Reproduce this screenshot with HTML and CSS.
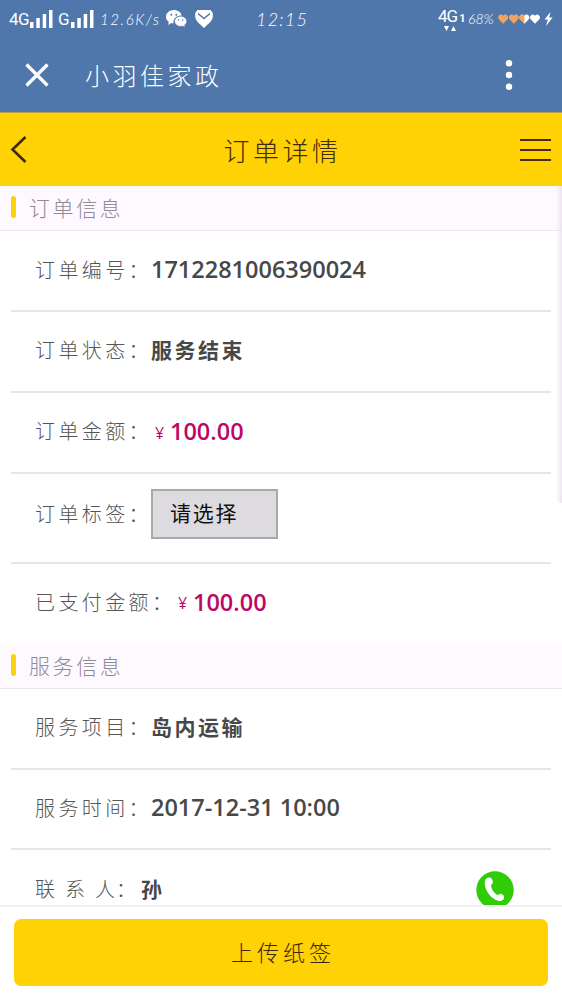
FILE: index.html
```html
<!DOCTYPE html>
<html lang="zh-CN">
<head>
<meta charset="utf-8">
<title>订单详情</title>
<link rel="stylesheet" href="styles.css">
</head>
<body>
<div class="phone">
  <header class="appbar">
    <div class="status">
      <span class="net">4G</span>
      <svg class="bars" width="23" height="18" viewBox="0 0 23 18"><path d="M0 12h3.500v6H0zM6.300 8h3.500v10H6.300zM12.700 4h3.500v14h-3.500zM19 0h3.500v18H19z" fill="#fff"/></svg>
      <span class="net gap">G</span>
      <svg class="bars" width="23" height="18" viewBox="0 0 23 18"><path d="M0 12h3.500v6H0zM6.300 8h3.500v10H6.300zM12.700 4h3.500v14h-3.500zM19 0h3.500v18H19z" fill="#fff"/></svg>
      <span class="speed">12.6K/s</span>
      <svg class="wechat" width="21" height="18" viewBox="0 0 21 18"><path d="M8 0C3.500 0 0 2.900 0 6.700c0 2.100 1 3.900 2.800 5.100L2.200 15l3.100-1.900 2.100.3C7 8.500 10.500 5.500 15.700 5.500 14.900 2.300 11.800 0 8 0z" fill="#fff"/><path d="M14.700 6.200c-3.500 0-6.100 2.300-6.100 5.100s2.600 5.100 6.100 5.100l1.900-.3 2.500 1.500-.5-2.500c1.300-.9 2.100-2.300 2.100-3.800 0-2.800-2.600-5.100-6-5.100z" fill="#fff" stroke="#4f77ac" stroke-width=".6"/><g fill="#4f77ac"><circle cx="5.300" cy="4.700" r="1"/><circle cx="10.300" cy="4.700" r="1"/><circle cx="12.600" cy="10" r=".8"/><circle cx="16.600" cy="10" r=".8"/></g></svg>
      <svg class="shield" width="18" height="18" viewBox="0 0 18 18"><path d="M2.500 0h13l2.300 3v3.500c0 4.500-5.500 8-8.800 11.500C5.700 14.500.2 11 .2 6.500V3z" fill="#fff"/><path d="M3 3.500l6 5 6-5" fill="none" stroke="#4f77ac" stroke-width="1.500"/></svg>
      <span class="clock">12:15</span>
      <span class="data"><span class="data-line">4G<b>1</b></span><svg class="arrows" width="12" height="5" viewBox="0 0 12 5"><path d="M0 0h5L2.500 5zM7 5h5L9.500 0z" fill="#fff"/></svg></span>
      <span class="percent">68%</span>
      <svg class="hearts" width="43" height="10" viewBox="0 0 43 10">
        <defs><path id="heart" d="M5.200 9.700L.8 5.300C-1.200 2.500 2.500-1.300 5.200 1.700 7.900-1.300 11.600 2.500 9.600 5.300z"/></defs>
        <use href="#heart" x="0" fill="#f4a35c"/><use href="#heart" x="10.600" fill="#f4a35c"/><use href="#heart" x="21.200" fill="#fff"/><path d="M26.400 9.700L22 5.300c-2-2.800 1.700-6.600 4.400-3.600z" fill="#f4a35c"/><use href="#heart" x="31.800" fill="#fff"/>
      </svg>
      <svg class="bolt" width="9" height="14" viewBox="0 0 9 14"><path d="M6.500 0L.5 7.600h3.300L2 14l6.700-8.400H5.300z" fill="#fff"/></svg>
    </div>
    <div class="titlebar">
      <svg width="24" height="24" viewBox="0 0 24 24"><path d="M1.500 1.500l21 21m0-21l-21 21" stroke="#fff" stroke-width="3.200"/></svg>
      <h1 class="app-name">小羽佳家政</h1>
      <svg width="8" height="32" viewBox="0 0 8 32" fill="#fff"><circle cx="4" cy="4.300" r="3.200"/><circle cx="4" cy="16" r="3.200"/><circle cx="4" cy="27.700" r="3.200"/></svg>
    </div>
  </header>
  <nav class="navbar">
    <svg width="18" height="28" viewBox="0 0 18 28"><path d="M16.500 1L3.500 13.500l13 12.500" fill="none" stroke="#422a0c" stroke-width="2.600"/></svg>
    <h2 class="nav-title">订单详情</h2>
    <svg width="31" height="23" viewBox="0 0 31 23"><path d="M0 2h31M0 12h31M0 22h31" stroke="#4a2a08" stroke-width="2"/></svg>
  </nav>
  <main class="content">
    <h3 class="section">订单信息</h3>
    <div class="rows">
      <div class="row first"><span class="label">订单编号：</span><b class="num">1712281006390024</b></div>
      <div class="row"><span class="label">订单状态：</span><b class="value">服务结束</b></div>
      <div class="row amount"><span class="label">订单金额：</span><span class="price"><span class="yen">¥</span>100.00</span></div>
      <div class="row select-row"><span class="label">订单标签：</span><button class="select">请选择</button></div>
      <div class="row last"><span class="label wide">已支付金额：</span><span class="price"><span class="yen">¥</span>100.00</span></div>
    </div>
    <h3 class="section">服务信息</h3>
    <div class="rows">
      <div class="row"><span class="label">服务项目：</span><b class="value">岛内运输</b></div>
      <div class="row"><span class="label">服务时间：</span><b class="num">2017-12-31 10:00</b></div>
      <div class="row contact"><span class="label name-label"><span>联</span><span>系</span><span>人：</span></span><b class="value">孙</b>
        <svg class="call" width="38" height="38" viewBox="0 0 38 38"><circle cx="19" cy="19" r="18.700" fill="#30cc08"/><path d="M9 9.500C9.800 7.200 12.500 5.800 14.500 6.700c1.800 1.400 2.600 3.200 2.200 5.200-.4 1.400-1.700 1.500-1.700 3 .6 3.600 3.200 7.200 6.200 9 1.600.4 2-1.500 3.500-1.200 1.900.3 3.300 1.800 3.400 3.700-.2 2.100-2.200 3.600-4.300 3.500C15.800 29.500 7.300 18.500 9 9.500z" fill="#fff"/></svg>
      </div>
    </div>
    <div class="edge"></div>
  </main>
  <footer class="footer"><button class="upload">上传纸签</button></footer>
</div>
</body>
</html>
```
FILE: styles.css
```css
* { box-sizing: border-box; }
body { margin: 0; font-family: "Noto Sans CJK SC", sans-serif; background: #fff; }
h1, h2, h3 { margin: 0; font-weight: 300; }
svg { flex: none; display: block; }
button { font-family: inherit; }

.phone { width: 562px; height: 1000px; display: flex; flex-direction: column; overflow: hidden; }

.appbar { height: 112px; flex: none; background: #4f77ac; color: #fff; }
.status { height: 38px; display: flex; align-items: center; padding-left: 9px; white-space: nowrap; }
.net { width: 20px; font: 17px/20px Roboto, sans-serif; letter-spacing: -.6px; }
.net.gap { width: 12px; margin-left: 5px; }
.bars { margin-left: 1px; }
.speed { width: 61px; margin-left: 6px; font: italic 300 15px/20px Lato, sans-serif; letter-spacing: 1.600px; }
.wechat { margin-left: 5px; }
.shield { margin-left: 8px; }
.clock { width: 50px; margin-left: 43px; font: italic 300 18px/22px Lato, sans-serif; letter-spacing: 1.200px; }
.data { width: 28px; margin-left: 132px; display: flex; flex-direction: column; padding-top: 1px; }
.data-line { font: 17px/15px Roboto, sans-serif; letter-spacing: -1px; }
.data-line b { font-size: 11px; margin-left: 2px; }
.arrows { margin-left: 6px; }
.percent { width: 28px; margin-left: 2px; font: italic 300 14px/20px Lato, sans-serif; }
.hearts { margin-left: 2px; }
.bolt { margin-left: 3px; }

.titlebar { height: 74px; display: flex; align-items: center; padding: 0 49px 0 25px; }
.app-name { margin: 0 auto 0 36px; font-size: 24px; font-weight: 300; letter-spacing: 3.500px; line-height: 34px; }

.navbar { height: 74px; flex: none; display: flex; align-items: center; justify-content: space-between; padding: 0 11px 0 9px; background: #ffd205; border-top: 1px solid #b5a247; color: #422a0c; }
.nav-title { margin-left: 18px; font-size: 26px; letter-spacing: 3.500px; line-height: 36px; }

.content { position: relative; height: 719px; flex: none; overflow: hidden; }
.section { height: 45px; display: flex; align-items: center; padding: 0 0 2px 11px; background: #fdf9ff; border-bottom: 1px solid #e9e7ea; color: #8f8a92; font-size: 21px; letter-spacing: 2.600px; line-height: 30px; }
.section::before { content: ""; width: 5px; height: 22px; margin-right: 13px; border-radius: 3px; background: #f9d20c; }
.rows { padding: 0 11px; }
.row { height: 80.500px; display: flex; align-items: center; padding: 0 0 2px 24px; border-bottom: 2px solid #e6e6e6; color: #484848; }
.first { height: 81px; }
.amount { height: 81.500px; }
.select-row { height: 90px; padding-bottom: 9px; }
.last { height: 80px; border-bottom: 0; padding-bottom: 5px; }
.label { width: 116px; flex: none; font-size: 20px; font-weight: 300; letter-spacing: 3.400px; line-height: 30px; white-space: nowrap; color: #555; }
.label.wide { width: 139px; }
.name-label { width: 106px; display: flex; gap: 9px; letter-spacing: 1px; }
.value { margin-top: -2px; font-size: 21px; letter-spacing: 2.500px; line-height: 30px; }
.num, .price { font: 600 23.500px/30px "Open Sans", sans-serif; white-space: nowrap; }
.num { margin-top: -1px; }
.price { display: flex; align-items: center; color: #bd0767; }
.yen { width: 19px; padding: 3px 0 0 4px; font-size: 16px; font-weight: 400; }
.select { width: 127px; height: 50px; padding: 0 0 3px 17px; text-align: left; background: #dedbe0; border: 2px solid #a6aaa8; font-size: 21px; letter-spacing: 1.800px; color: #111; }
.contact { border-bottom: 0; height: 80px; }
.call { margin: 2px 37px 0 auto; }
.edge { position: absolute; right: 0; top: 0; width: 6px; height: 317px; background: linear-gradient(to right, transparent, #ece5ef); }

.footer { height: 95px; flex: none; padding: 12px 14px; border-top: 2px solid #f0f0f0; background: #fff; }
.upload { width: 534px; height: 67px; display: block; padding: 0 0 3px 4px; border: 0; border-radius: 7px; background: #ffd205; color: #3c2808; font-size: 22px; font-weight: 300; letter-spacing: 4px; }
```
